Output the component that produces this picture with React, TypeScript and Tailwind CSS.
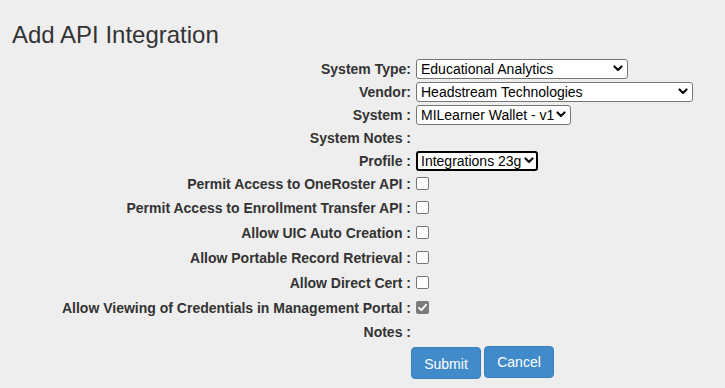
import { ReactNode } from "react";

type SelectProps = { value: string; width: string; focused?: boolean };

function FakeSelect({ value, width, focused }: SelectProps) {
  return (
    <div
      className={`${width} h-[20px] flex items-center justify-between bg-white rounded-[3px] text-[14px] text-black ${
        focused ? "border-2 border-black pl-[3px] pr-[2px]" : "border border-[#767676] pl-[4px] pr-[4px]"
      }`}
    >
      <span className="whitespace-nowrap leading-none">{value}</span>
      <svg width="10" height="7" viewBox="0 0 10 7" className="shrink-0">
        <polyline
          points="1.5 1.5 5 5 8.5 1.5"
          fill="none"
          stroke="#111"
          strokeWidth="2.2"
          strokeLinecap="round"
          strokeLinejoin="round"
        />
      </svg>
    </div>
  );
}

function Check({ checked }: { checked?: boolean }) {
  if (checked) {
    return (
      <div className="w-[13px] h-[13px] rounded-[2px] bg-[#7b7b7b] flex items-center justify-center">
        <svg width="11" height="11" viewBox="0 0 11 11">
          <polyline
            points="2 5.8 4.4 8.2 9 2.8"
            fill="none"
            stroke="white"
            strokeWidth="1.8"
            strokeLinecap="round"
            strokeLinejoin="round"
          />
        </svg>
      </div>
    );
  }
  return <div className="w-[13px] h-[13px] rounded-[2px] border border-[#767676] bg-white" />;
}

function Row({ label, h, children }: { label: string; h: string; children?: ReactNode }) {
  return (
    <div className={`flex items-center ${h}`}>
      <div className="w-[411px] text-right font-bold text-[14px] text-[#333] whitespace-nowrap leading-none">
        {label}
      </div>
      <div className="pl-[5px] flex items-center">{children}</div>
    </div>
  );
}

export default function App() {
  return (
    <div
      className="w-[725px] h-[388px] bg-[#eeeeee] text-[#333] overflow-hidden"
      style={{ fontFamily: '"Liberation Sans", Arial, sans-serif' }}
    >
      <h1 className="ml-[12px] mt-[21px] text-[24px] leading-[28px] font-normal text-[#333]">
        Add API Integration
      </h1>
      <form className="mt-[8px] flex flex-col">
        <Row label="System Type:" h="h-[23px]">
          <FakeSelect value="Educational Analytics" width="w-[212px]" />
        </Row>
        <Row label="Vendor:" h="h-[23px]">
          <FakeSelect value="Headstream Technologies" width="w-[277px]" />
        </Row>
        <Row label="System :" h="h-[23px]">
          <FakeSelect value="MILearner Wallet - v1" width="w-[155px]" />
        </Row>
        <Row label="System Notes :" h="h-[23px]" />
        <Row label="Profile :" h="h-[23px]">
          <FakeSelect value="Integrations 23g" width="w-[122px]" focused />
        </Row>
        <Row label="Permit Access to OneRoster API :" h="h-[23px]">
          <Check />
        </Row>
        <Row label="Permit Access to Enrollment Transfer API :" h="h-[25px]">
          <Check />
        </Row>
        <Row label="Allow UIC Auto Creation :" h="h-[25px]">
          <Check />
        </Row>
        <Row label="Allow Portable Record Retrieval :" h="h-[25px]">
          <Check />
        </Row>
        <Row label="Allow Direct Cert :" h="h-[25px]">
          <Check />
        </Row>
        <Row label="Allow Viewing of Credentials in Management Portal :" h="h-[25px]">
          <Check checked />
        </Row>
        <Row label="Notes :" h="h-[24px]" />
        <div className="flex items-start ml-[411px] mt-[2px] gap-[3px]">
          <button
            type="button"
            className="mt-[1px] w-[70px] h-[32px] rounded-[4px] bg-[#428bca] border border-[#3a7fbd] text-white text-[14px] pt-[2px]"
          >
            Submit
          </button>
          <button
            type="button"
            className="w-[70px] h-[32px] rounded-[4px] bg-[#428bca] border border-[#3a7fbd] text-white text-[14px]"
          >
            Cancel
          </button>
        </div>
      </form>
    </div>
  );
}
